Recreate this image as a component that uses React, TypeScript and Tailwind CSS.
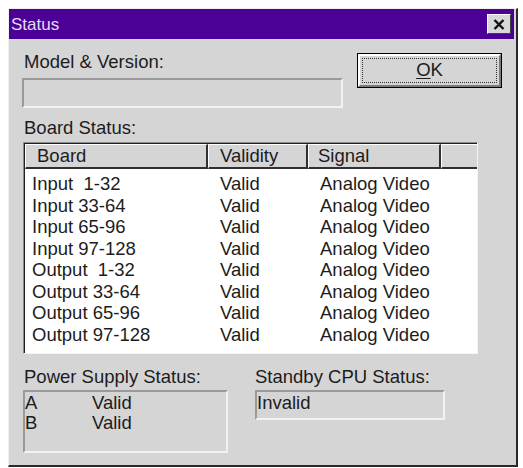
import React from "react";

const rows: [string, string, string][] = [
  ["Input  1-32", "Valid", "Analog Video"],
  ["Input 33-64", "Valid", "Analog Video"],
  ["Input 65-96", "Valid", "Analog Video"],
  ["Input 97-128", "Valid", "Analog Video"],
  ["Output  1-32", "Valid", "Analog Video"],
  ["Output 33-64", "Valid", "Analog Video"],
  ["Output 65-96", "Valid", "Analog Video"],
  ["Output 97-128", "Valid", "Analog Video"],
];

function Sunken({ className, children }: { className: string; children?: React.ReactNode }) {
  return (
    <div
      className={
        "border-2 border-t-[#9a9a9a] border-l-[#9a9a9a] border-b-[#f2f2f2] border-r-[#f2f2f2] " + className
      }
    >
      {children}
    </div>
  );
}

export default function App() {
  return (
    <div
      className="w-[523px] h-[468px] bg-white overflow-hidden pt-[8px] pl-[8px] text-[#1c1c1c]"
      style={{ fontFamily: '"Liberation Sans", Arial, sans-serif' }}
    >
      <div className="w-[510px] h-[459px] bg-[#d5d5d5] border-l border-t border-l-[#f0f0f0] border-t-[#f0f0f0] border-r-2 border-b-2 border-r-[#2a2a2a] border-b-[#2a2a2a] flex flex-col">
        {/* title bar */}
        <div className="h-[30px] mr-[2px] bg-[#4b0096] flex items-center justify-between pl-[2px] pr-[3px]">
          <span className="text-[17px] text-[#e6dbf5] leading-none">Status</span>
          <div className="w-[24px] h-[20px] bg-[#d8d8d8] border border-t-white border-l-white border-b-[#404040] border-r-[#404040] flex items-center justify-center">
            <svg width="12" height="11" viewBox="0 0 12 11">
              <path d="M1.5 1 L10.5 10 M10.5 1 L1.5 10" stroke="#111" strokeWidth="2.4" />
            </svg>
          </div>
        </div>

        {/* content */}
        <div className="pl-[13px] text-[18.5px]">
          <div className="flex">
            <div className="w-[321px] pt-[12px]">
              <div className="leading-[22px] pl-[2px]">Model &amp; Version:</div>
              <Sunken className="mt-[5px] h-[30px]" />
            </div>
            <div className="ml-[14px] mt-[14px] w-[145px] h-[35px] border border-black">
              <div className="w-full h-full border-2 border-t-white border-l-white border-b-[#7a7a7a] border-r-[#7a7a7a] p-[2px]">
                <div className="w-full h-full border border-dotted border-[#333] flex items-center justify-center leading-none">
                  <span>
                    <span className="underline underline-offset-2">O</span>K
                  </span>
                </div>
              </div>
            </div>
          </div>

          <div className="mt-[9px] leading-[22px] pl-[2px]">Board Status:</div>

          {/* table */}
          <div className="mt-[3px] ml-[1px] w-[455px] h-[212px] border-t border-l border-t-[#8a8a8a] border-l-[#8a8a8a] border-b border-r border-b-[#f4f4f4] border-r-[#f4f4f4]">
            <div className="w-full h-full bg-white border-t border-l border-t-[#202020] border-l-[#202020]">
              <div className="flex h-[25px] bg-[#d5d5d5] text-[18.5px]">
                <div className="w-[183px] border-t border-l border-t-white border-l-white border-b-2 border-r-2 border-b-[#303030] border-r-[#303030] pl-[11px] flex items-center leading-none">
                  Board
                </div>
                <div className="w-[100px] border-t border-l border-t-white border-l-white border-b-2 border-r-2 border-b-[#303030] border-r-[#303030] pl-[11px] flex items-center leading-none">
                  Validity
                </div>
                <div className="w-[133px] border-t border-l border-t-white border-l-white border-b-2 border-r-2 border-b-[#303030] border-r-[#303030] pl-[9px] flex items-center leading-none">
                  Signal
                </div>
                <div className="w-[36px] border-t border-l border-t-white border-l-white border-b-2 border-b-[#303030]" />
              </div>
              <div className="pt-[4px]">
                {rows.map((r) => (
                  <div key={r[0]} className="flex leading-[21.5px] whitespace-pre">
                    <div className="w-[183px] pl-[7px]">{r[0]}</div>
                    <div className="w-[100px] pl-[12px]">{r[1]}</div>
                    <div className="w-[133px] pl-[12px]">{r[2]}</div>
                  </div>
                ))}
              </div>
            </div>
          </div>

          {/* bottom */}
          <div className="flex mt-[12px]">
            <div className="w-[205px] ml-[1px]">
              <div className="leading-[22px] pl-[1px]">Power Supply Status:</div>
              <Sunken className="mt-[2px] h-[63px] pt-[1px] leading-[20px]">
                <div className="flex">
                  <span className="w-[67px]">A</span>
                  <span>Valid</span>
                </div>
                <div className="flex">
                  <span className="w-[67px]">B</span>
                  <span>Valid</span>
                </div>
              </Sunken>
            </div>
            <div className="ml-[27px] w-[190px]">
              <div className="leading-[22px]">Standby CPU Status:</div>
              <Sunken className="mt-[2px] h-[30px] pt-[1px] leading-[20px]">
                <span>Invalid</span>
              </Sunken>
            </div>
          </div>
        </div>
      </div>
    </div>
  );
}
